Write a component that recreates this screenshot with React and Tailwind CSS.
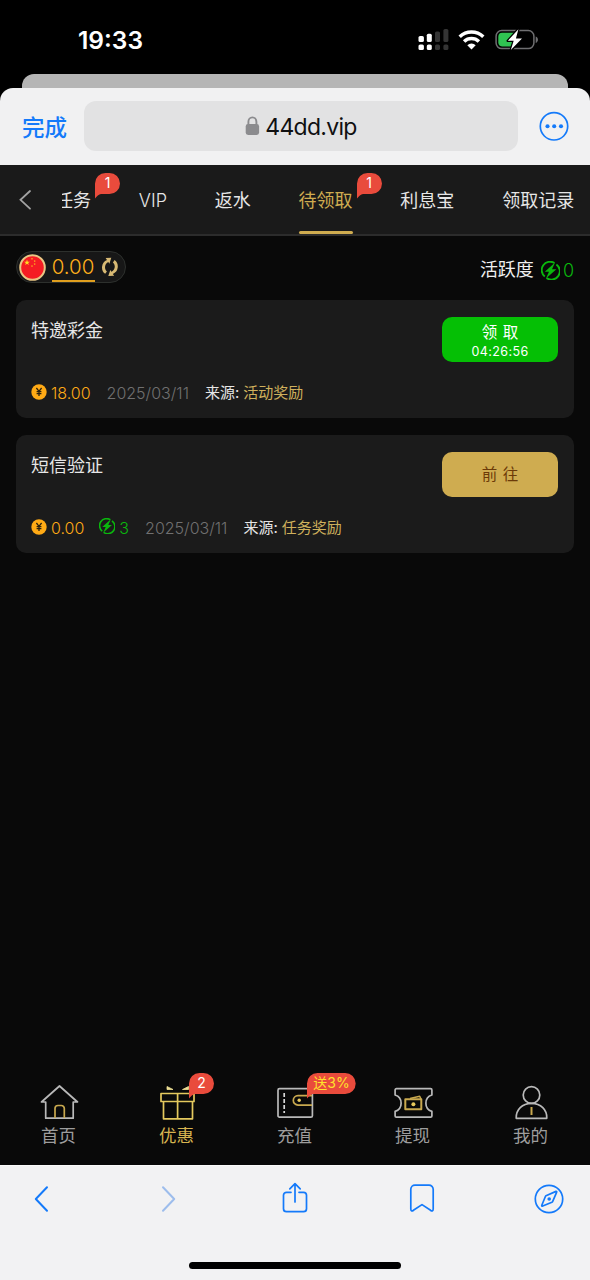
import React from "react";

const TABS = [
  { label: "任务", badge: "1" },
  { label: "VIP" },
  { label: "返水" },
  { label: "待领取", badge: "1", active: true },
  { label: "利息宝" },
  { label: "领取记录" },
];

function StatusBar() {
  return (
    <div className="flex h-[74px] shrink-0 items-start justify-between pl-[78px] pr-[51px] pt-[25px]">
      <span className="text-[24.5px] font-semibold leading-[30px] text-white">19:33</span>
      <div className="flex items-start pt-[3px]">
        <svg width="32" height="24" viewBox="0 0 32 24" className="mr-[8px]">
          <g fill="#fff">
            <rect x="0.5" y="8" width="5.4" height="6" rx="1.6" />
            <rect x="8.8" y="5.7" width="5" height="8.3" rx="1.6" />
            <rect x="0.5" y="16.5" width="5.4" height="5.5" rx="1.6" />
            <rect x="8.8" y="16.5" width="5" height="5.5" rx="1.6" />
          </g>
          <g fill="#343434">
            <rect x="17" y="3.5" width="5" height="10.5" rx="1.6" />
            <rect x="25.4" y="1" width="5" height="13" rx="1.6" />
            <rect x="17" y="16.5" width="5" height="5.5" rx="1.6" />
            <rect x="25.4" y="16.5" width="5" height="5.5" rx="1.6" />
          </g>
        </svg>
        <svg width="28" height="24" viewBox="0 0 28 24" className="mr-[9px]">
          <g fill="none" stroke="#fff" strokeWidth="3.5">
            <path d="M1.7 8.8a17.2 17.2 0 0 1 23.6 0" />
            <path d="M6.1 13.5a10.8 10.8 0 0 1 14.8 0" />
          </g>
          <path d="M9.3 17.2a6 6 0 0 1 8.4 0L13.5 21.4Z" fill="#fff" />
        </svg>
        <svg width="44" height="24" viewBox="0 0 44 24">
          <rect x="1.1" y="2.6" width="37.8" height="18" rx="5.6" fill="none" stroke="#6e6e70" strokeWidth="1.5" />
          <path d="M40.7 8.5c3 1 3 5.4 0 6.4z" fill="#6e6e70" />
          <path d="M7 4.8h12v13.6H7A4 4 0 0 1 3.3 14.5V8.7A4 4 0 0 1 7 4.8Z" fill="#30c552" />
          <path
            d="M23.4 1.2 12.8 12.8h5.9l-2.9 9.3L27 10.5h-6.1Z"
            fill="#fff"
            stroke="#000"
            strokeWidth="2.6"
            strokeLinejoin="round"
            paintOrder="stroke"
          />
        </svg>
      </div>
    </div>
  );
}

function AddressBar() {
  return (
    <div className="flex h-[77px] shrink-0 items-start rounded-t-[13px] bg-[#f1f1f2] pl-[22px] pt-[13px]">
      <span className="w-[62px] text-[22.5px] font-medium leading-[53px] text-[#147afa]">完成</span>
      <div className="flex h-[50px] w-[434px] items-center justify-center rounded-[12px] bg-[#e2e2e3]">
        <svg width="15" height="20" viewBox="0 0 15 20" className="mr-[5px]">
          <rect x="0.7" y="8" width="13.4" height="11" rx="2.4" fill="#8b8b8e" />
          <path d="M3.4 9V5.8a4 4.4 0 0 1 8 0V9" fill="none" stroke="#8b8b8e" strokeWidth="1.9" />
        </svg>
        <span className="pt-[2px] text-[23px] tracking-[-0.7px] text-[#101011]">44dd.vip</span>
      </div>
      <svg width="30" height="30" viewBox="0 0 30 30" className="ml-[21px] mt-[10px]">
        <circle cx="15" cy="15.3" r="13.7" fill="none" stroke="#147afa" strokeWidth="1.7" />
        <g fill="#147afa">
          <circle cx="8.5" cy="15.3" r="2.05" />
          <circle cx="15.2" cy="15.3" r="2.05" />
          <circle cx="22" cy="15.3" r="2.05" />
        </g>
      </svg>
    </div>
  );
}

function Badge({ text, wide, className }) {
  return (
    <span className={`absolute z-10 h-[26px] ${wide ? "w-[49px]" : "w-[25px]"} ${className}`}>
      <svg viewBox={wide ? "0 0 49 26" : "0 0 25 26"} className="absolute inset-0 h-full w-full">
        <path
          d={
            wide
              ? "M10.5 0H38.2a10.5 10.5 0 0 1 0 21H6C4 21.4 1.6 23.4 0 25.5V10.5A10.5 10.5 0 0 1 10.5 0Z"
              : "M10.5 0H14.5a10.5 10.5 0 0 1 0 21H6C4 21.4 1.6 23.4 0 25.5V10.5A10.5 10.5 0 0 1 10.5 0Z"
          }
          fill="#e94b3c"
        />
      </svg>
      <span
        className={`relative block text-center leading-[19px] ${
          wide ? "text-[14px] text-[#ffe12b]" : "text-[14px] text-white"
        }`}
      >
        {text}
      </span>
    </span>
  );
}

function TabNav() {
  return (
    <nav className="flex h-[71px] shrink-0 border-b-2 border-[#2c2c2c] bg-[#1a1a1a]">
      <svg width="62" height="69" viewBox="0 0 62 69" className="shrink-0">
        <path d="M30 26 20.5 34.8 30 43.7" fill="none" stroke="#a3a3a3" strokeWidth="1.8" strokeLinecap="round" />
      </svg>
      <div className="flex min-w-0 flex-1 overflow-hidden">
        <div className="-ml-[7px] flex gap-[47.8px]">
          {TABS.map((t) => (
            <div
              key={t.label}
              className={`relative flex h-[69px] shrink-0 flex-col justify-between whitespace-nowrap text-[18px] ${
                t.active ? "text-[#cfac50]" : "text-[#e6e6e6]"
              }`}
            >
              <span className="pt-[23px] leading-[26px]">
                {t.label === "VIP" ? <span className="font-light">VIP</span> : t.label}
              </span>
              {t.active && <span className="h-[3px] rounded-[1.5px] bg-[#cfac50]" />}
              {t.badge && <Badge text={t.badge} className="left-full top-[8px] ml-[4px]" />}
            </div>
          ))}
        </div>
      </div>
    </nav>
  );
}

function Bolt({ size }) {
  return (
    <svg width={size} height={size} viewBox="0 0 20 20">
      <g fill="none" stroke="#0ab70d" strokeWidth="2">
        <path d="M14.2 2.1A8.8 8.8 0 0 0 4 16.4" />
        <path d="M16.2 3.6A8.8 8.8 0 0 1 5.8 17.9" />
      </g>
      <path d="M14.8 1.6 4 11.2h4.4L5.2 18.4 16.2 8.6h-4.6Z" fill="#0ab70d" />
    </svg>
  );
}

const STAR = "M0-1 .235-.324.951-.309.38.124.588.809 0 .4-.588.809-.38.124-.951-.309-.235-.324Z";

function BalanceRow() {
  return (
    <div className="flex h-[64px] shrink-0 items-start justify-between pl-[16px] pr-[16px] pt-[15px]">
      <div className="flex h-[32px] w-[110px] items-center rounded-full border border-[#2d302d] bg-[#171717] pl-[1.5px]">
        <svg width="27" height="27" viewBox="0 0 27 27" className="shrink-0">
          <circle cx="13.5" cy="13.5" r="12.3" fill="#f51c23" stroke="#e9c684" strokeWidth="2" />
          <g fill="#ffdf20">
            <path d={STAR} transform="translate(8 8.6) scale(3)" />
            <path d={STAR} transform="translate(13 4.9) scale(1.1)" />
            <path d={STAR} transform="translate(15.7 7) scale(1.1)" />
            <path d={STAR} transform="translate(15.7 10) scale(1.1)" />
            <path d={STAR} transform="translate(13 12) scale(1.1)" />
          </g>
        </svg>
        <span className="ml-[6px] mt-[1px] h-[29px] w-[43px] shrink-0 whitespace-nowrap border-b-2 border-b-[#e09f1e] text-center text-[20.5px] font-light leading-[28px] text-[#ffb01c]">
          0.00
        </span>
        <svg width="18" height="20" viewBox="0 0 18 20" className="ml-[6px] shrink-0">
          <g fill="#d8ba74">
            <path d="M10.3.8 4.6 1.1 6 3A8 8 0 0 0 4.2 16.8L5.9 14.5A5.7 5.7 0 0 1 7.3 5.1L8.4 6.8Z" />
            <path d="M7.3 19.1 13.2 18.8 11.8 16.9A8 8 0 0 0 13.6 3.1L11.9 5.4A5.7 5.7 0 0 1 10.4 14.8L9.3 13.1Z" />
          </g>
        </svg>
      </div>
      <div className="flex items-center pt-[5px] text-[18px] leading-[26px] text-[#f0f0f0]">
        <span className="mr-[7px]">活跃度</span>
        <Bolt size={19} />
        <span className="ml-[3px] mt-[2px] font-light text-[#0ab70d]">0</span>
      </div>
    </div>
  );
}

function Coin() {
  return (
    <svg width="16" height="16" viewBox="0 0 16 16" className="-mt-[3px] shrink-0">
      <circle cx="8" cy="8" r="7.7" fill="#ffaa15" />
      <path
        d="M5.4 4 8 7.3 10.6 4M8 7v5M5.6 7.6h4.8M5.6 9.6h4.8"
        fill="none"
        stroke="#29200f"
        strokeWidth="1.3"
      />
    </svg>
  );
}

function RewardCard({ title, amount, activity, source, children }) {
  return (
    <section className="flex h-[118px] justify-between rounded-[10px] bg-[#1b1b1b] pl-[15px] pr-[16px] pt-[17px]">
      <div className="flex flex-col">
        <h2 className="text-[18px] leading-[28px] text-[#e6e6e6]">{title}</h2>
        <div className="mt-[37px] flex items-center text-[15px] leading-[22px] text-[#e6e6e6]">
          <Coin />
          <span className="ml-[4px] text-[16px] font-light text-[#ffaa15]">{amount}</span>
          {activity && (
            <span className="ml-[15px] flex items-center text-[#0ab70d]">
              <span className="-mt-[4px] flex">
                <Bolt size={16} />
              </span>
              <span className="ml-[4px] text-[16px] font-light">{activity}</span>
            </span>
          )}
          <span className="ml-[16px] text-[16px] font-light text-[#707070]">2025/03/11</span>
          <span className="ml-[16px]">来源:</span>
          <span className="ml-[4px] text-[#cfb05c]">{source}</span>
        </div>
      </div>
      {children}
    </section>
  );
}

const NAV = [
  {
    label: "首页",
    icon: (
      <>
        <path d="M5.7 18H1.5L19.5 2 37.5 18H33.2V34.2H5.7Z" stroke="#b9b9b9" />
        <path d="M15 34V24.5a3 3 0 0 1 3-3h3.3a3 3 0 0 1 3 3V34" stroke="#c9a94f" />
      </>
    ),
  },
  {
    label: "优惠",
    active: true,
    badge: "2",
    icon: (
      <g stroke="#e4c95e">
        <path d="M3 9.5h33v8H3ZM5.5 17.5v17.3h29V17.5M19.6 9.5v25" />
        <path d="M9 5.5V2.5l6 3ZM30.5 5.5V2.5l-6 3Z" fill="#eedf94" stroke="#eedf94" strokeWidth="0.8" />
      </g>
    ),
  },
  {
    label: "充值",
    badge: "送3%",
    wide: true,
    icon: (
      <>
        <rect x="2" y="4.7" width="34.4" height="28.5" rx="1.5" stroke="#b9b9b9" />
        <path d="M8.2 9v20" stroke="#d8d8d8" strokeDasharray="4 2" />
        <path d="M36 11.7H22a4.6 4.6 0 0 0 0 9.4H36" stroke="#c9a94f" />
        <circle cx="23.2" cy="16.3" r="1.7" fill="#e7c85c" stroke="none" />
      </>
    ),
  },
  {
    label: "提现",
    icon: (
      <>
        <path
          d="M2.4 4.7H36.6a1.3 1.3 0 0 1 1.3 1.3V11a8.6 8.6 0 0 0 0 16.4v4.5a1.3 1.3 0 0 1-1.3 1.3H2.4a1.3 1.3 0 0 1-1.3-1.3V27.4a8.6 8.6 0 0 0 0-16.4V6A1.3 1.3 0 0 1 2.4 4.7Z"
          stroke="#b9b9b9"
        />
        <rect x="11.3" y="15.3" width="16" height="10" stroke="#c9a94f" strokeWidth="2" />
        <path d="M16 14.5 25.7 12.3 27 15" stroke="#c9a94f" strokeWidth="1.5" />
        <circle cx="19.4" cy="20.3" r="2" fill="#e7c85c" stroke="none" />
      </>
    ),
  },
  {
    label: "我的",
    icon: (
      <>
        <circle cx="19.5" cy="11" r="8.3" stroke="#b9b9b9" />
        <path d="M4.2 34.3h30.6c.4-8.5-6-15-15.3-15S3.8 25.8 4.2 34.3Z" stroke="#b9b9b9" />
        <path d="M19.5 23v8" stroke="#c9a94f" strokeWidth="2" />
      </>
    ),
  },
];

function BottomNav() {
  return (
    <nav className="grid h-[83px] shrink-0 grid-cols-5">
      {NAV.map((n) => (
        <div
          key={n.label}
          className={`relative flex flex-col items-center pt-[2px] text-[17.5px] leading-[26px] ${
            n.active ? "text-[#d7b350]" : "text-[#9d9d9d]"
          }`}
        >
          <svg width="39" height="38" viewBox="0 0 39 38" fill="none" strokeWidth="1.7" strokeLinejoin="round">
            {n.icon}
          </svg>
          <span className="mr-[1px] mt-[1px]">{n.label}</span>
          {n.badge && <Badge text={n.badge} wide={n.wide} className="left-1/2 -top-[9px] ml-[12px]" />}
        </div>
      ))}
    </nav>
  );
}

function BrowserToolbar() {
  return (
    <footer className="flex h-[115px] shrink-0 flex-col items-center justify-between border-t border-[#fafafa] bg-[#f2f2f3] pb-[11px]">
      <div className="flex w-full justify-between pl-[25px] pr-[25px] pt-[16px]">
        {[
          <path key="b" d="M22 5.3 10.8 17 22 28.7" strokeWidth="2" />,
          <path key="f" d="M11 5.3 22.2 17 11 28.7" strokeWidth="2" stroke="#9dbdec" />,
          <g key="s">
            <path d="M12 10.3H7.5A3 3 0 0 0 4.5 13.3V26.7A3 3 0 0 0 7.5 29.7H24.5A3 3 0 0 0 27.5 26.7V13.3A3 3 0 0 0 24.5 10.3H20" />
            <path d="M16 20V2M10.8 6.8 16 1.7 21.2 6.8" />
          </g>,
          <path
            key="m"
            d="M4.8 27V7.3A4.2 4.2 0 0 1 9 3.1H23A4.2 4.2 0 0 1 27.2 7.3V27C27.2 29.1 25.8 29.4 24.6 28.3L16 22.6 7.4 28.3C6.2 29.4 4.8 29.1 4.8 27Z"
          />,
          <g key="c">
            <circle cx="16" cy="17" r="13.7" />
            <path d="M23 9.4 13 13.8Q12.6 14 12.4 14.5L8.8 23.3Q8.5 24.5 9.7 24L18.9 20.2Q19.5 20 19.7 19.4L23.6 10.3Q24 9.2 23 9.4Z" />
            <circle cx="16.2" cy="17" r="1.8" fill="#147afa" stroke="none" />
          </g>,
        ].map((icon, i) => (
          <svg
            key={i}
            width="32"
            height="34"
            viewBox="0 0 32 34"
            fill="none"
            stroke="#147afa"
            strokeWidth="1.7"
            strokeLinecap="round"
            strokeLinejoin="round"
          >
            {icon}
          </svg>
        ))}
      </div>
      <div className="h-[7px] w-[212px] rounded-full bg-black" />
    </footer>
  );
}

export default function App() {
  return (
    <div className="flex h-[1280px] w-[590px] flex-col overflow-hidden bg-black font-['Inter','Noto_Sans_CJK_SC',sans-serif]">
      <StatusBar />
      <div className="mx-[22px] h-[14px] shrink-0 rounded-t-[12px] bg-[#b5b5b5]" />
      <AddressBar />
      <TabNav />
      <main className="flex min-h-0 flex-1 flex-col bg-[#090909]">
        <BalanceRow />
        <div className="flex flex-1 flex-col gap-[17px] px-[16px]">
          <RewardCard title="特邀彩金" amount="18.00" source="活动奖励">
            <button className="flex h-[45px] w-[116px] flex-col items-center rounded-[10px] bg-[#05bf05] pt-[5px] text-white">
              <span className="text-[15.5px] leading-[22px] [word-spacing:1px]">领 取</span>
              <span className="text-[12.5px] leading-[16px] tracking-[0.4px]">04:26:56</span>
            </button>
          </RewardCard>
          <RewardCard title="短信验证" amount="0.00" activity="3" source="任务奖励">
            <button className="flex h-[45px] w-[116px] items-center justify-center rounded-[10px] bg-[#cfac50] text-[15.5px] text-[#6c3a08] [word-spacing:1px]">
              前 往
            </button>
          </RewardCard>
        </div>
        <BottomNav />
      </main>
      <BrowserToolbar />
    </div>
  );
}
